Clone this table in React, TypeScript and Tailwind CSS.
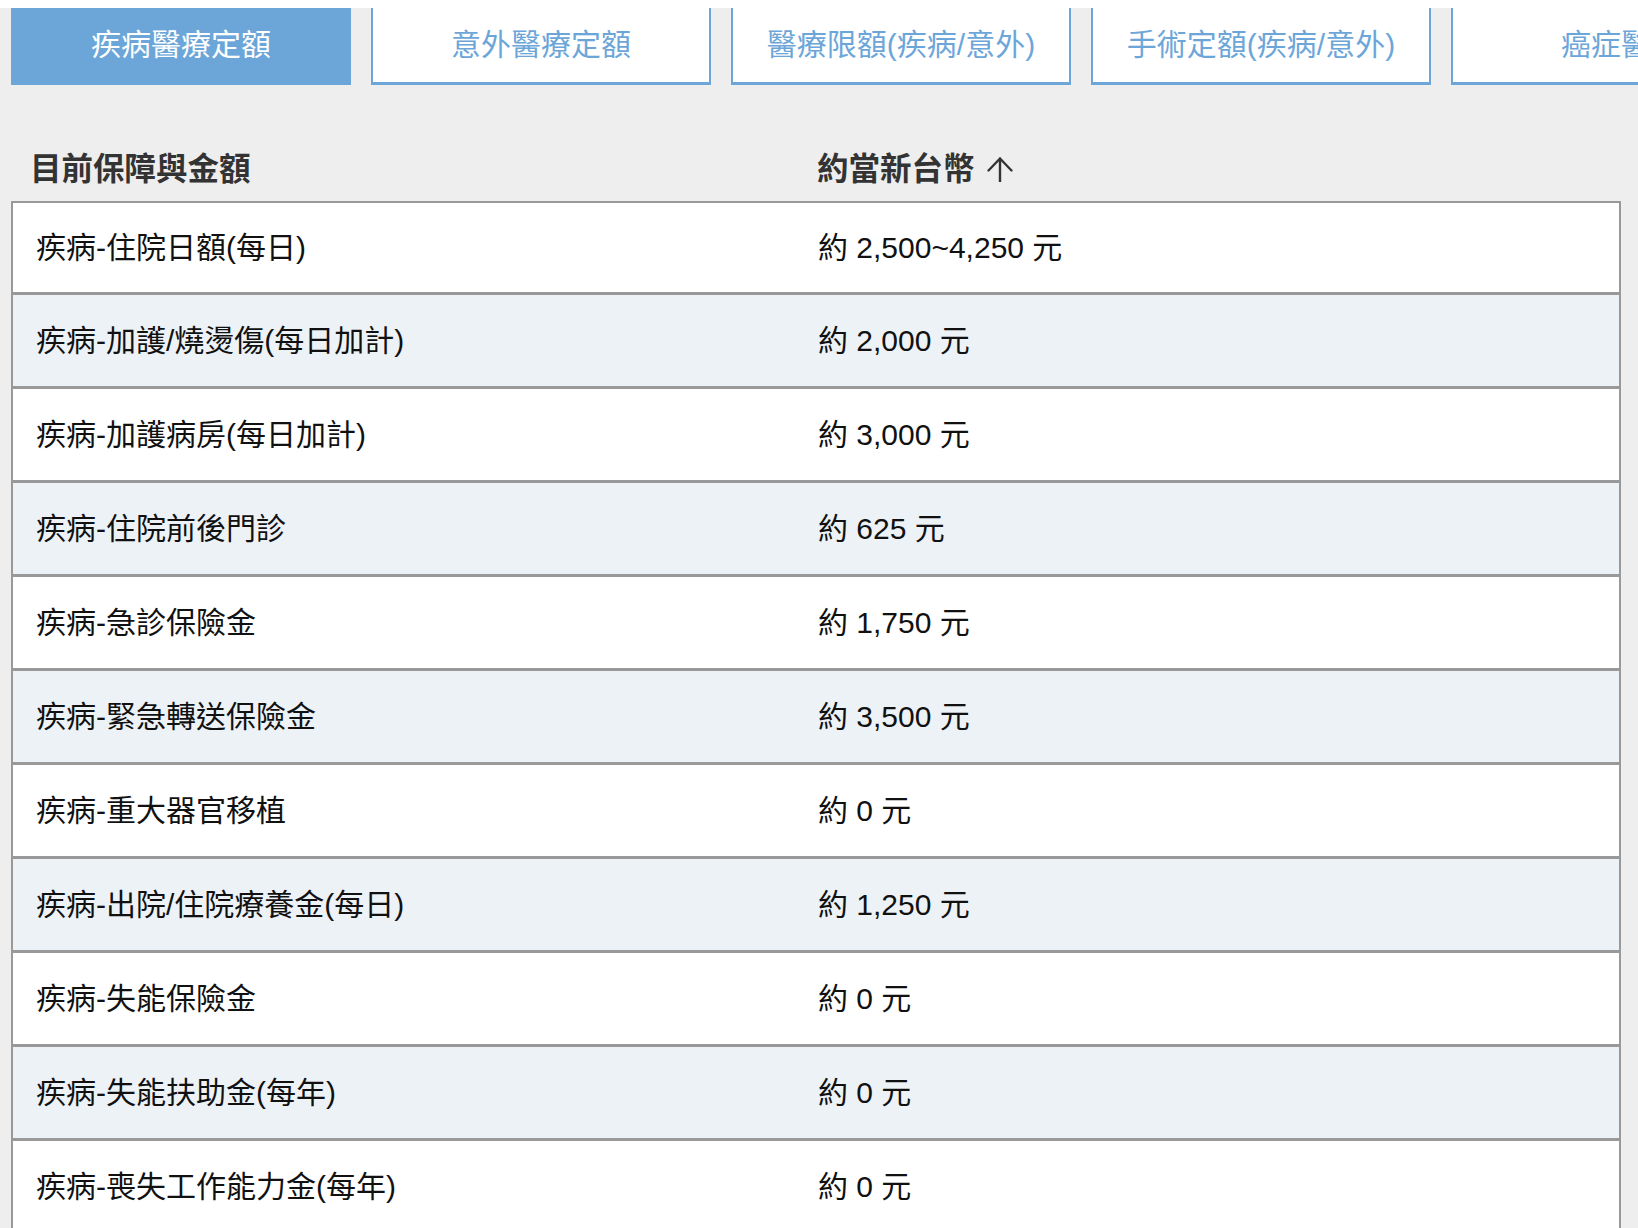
const tabs = [
  '疾病醫療定額',
  '意外醫療定額',
  '醫療限額(疾病/意外)',
  '手術定額(疾病/意外)',
  '癌症醫療',
];

const rows: [string, string][] = [
  ['疾病-住院日額(每日)', '約 2,500~4,250 元'],
  ['疾病-加護/燒燙傷(每日加計)', '約 2,000 元'],
  ['疾病-加護病房(每日加計)', '約 3,000 元'],
  ['疾病-住院前後門診', '約 625 元'],
  ['疾病-急診保險金', '約 1,750 元'],
  ['疾病-緊急轉送保險金', '約 3,500 元'],
  ['疾病-重大器官移植', '約 0 元'],
  ['疾病-出院/住院療養金(每日)', '約 1,250 元'],
  ['疾病-失能保險金', '約 0 元'],
  ['疾病-失能扶助金(每年)', '約 0 元'],
  ['疾病-喪失工作能力金(每年)', '約 0 元'],
];

const SortArrow = () => (
  <svg width="26" height="25" viewBox="0 0 26 25" fill="none" className="ml-[12px]">
    <path
      d="M13 1.5 L1.5 13.5 M13 1.5 L24.5 13.5 M13 1.5 V25"
      stroke="#333333"
      strokeWidth="2.4"
      strokeLinecap="round"
    />
  </svg>
);

const App = () => {
  return (
    <div className="min-h-screen bg-[#eeeeee] font-['Liberation_Sans','Noto_Sans_CJK_TC',sans-serif]">
      <div className="h-[8px] bg-white" />

      {/* tabs */}
      <div className="flex gap-[20px] overflow-hidden pl-[11px]">
        {tabs.map((tab, i) =>
          i === 0 ? (
            <div
              key={tab}
              className="flex h-[77px] w-[340px] shrink-0 items-center justify-center bg-[#6ca6d8] pb-[3px] text-[30px] leading-[36px] text-white"
            >
              {tab}
            </div>
          ) : (
            <div
              key={tab}
              className="flex h-[77px] w-[340px] shrink-0 items-center justify-center whitespace-nowrap border-x-2 border-b-[3px] border-[#6ca6d9] bg-white pb-[1px] text-[30px] leading-[36px] text-[#6ca6d9]"
            >
              {tab}
            </div>
          )
        )}
      </div>

      {/* table */}
      <div className="ml-[11px] w-[1610px]">
        <div className="flex h-[116px] items-end pb-[14px] text-[31.5px] font-bold leading-[36px] text-[#333333]">
          <div className="w-[784px] pl-[19px]">目前保障與金額</div>
          <div className="flex items-center pl-[22px]">
            約當新台幣
            <SortArrow />
          </div>
        </div>

        <div className="border-x-2 border-t-2 border-[#999999]">
          {rows.map(([name, amount], i) => (
            <div
              key={name}
              className={`flex items-center border-b-[3px] border-[#999999] text-[30px] leading-[36px] text-[#111111] ${
                i === 0 ? 'h-[92px]' : 'h-[94px]'
              } ${i % 2 === 1 ? 'bg-[#edf2f7]' : 'bg-white'}`}
            >
              <div className="w-[782px] pl-[23px]">{name}</div>
              <div className="pl-[23px]">{amount}</div>
            </div>
          ))}
        </div>
      </div>
    </div>
  );
};

export default App;
